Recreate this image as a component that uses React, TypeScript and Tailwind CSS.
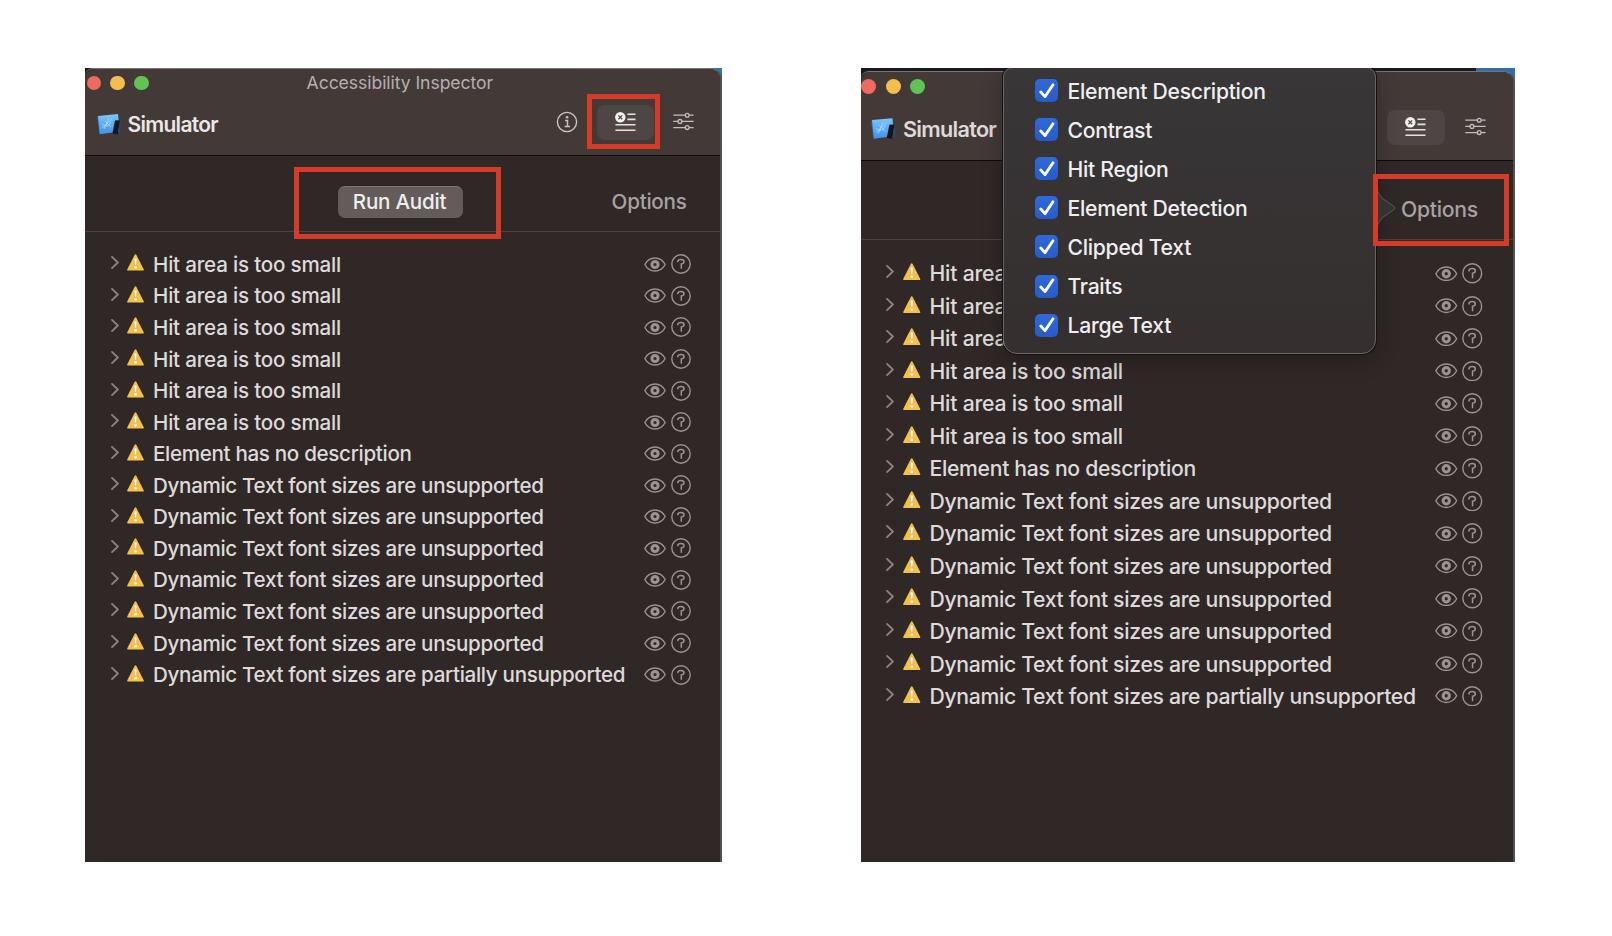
import type { ReactNode } from "react";

const issues = [
  ...Array<string>(6).fill("Hit area is too small"),
  "Element has no description",
  ...Array<string>(6).fill("Dynamic Text font sizes are unsupported"),
  "Dynamic Text font sizes are partially unsupported",
];

const auditChecks = [
  "Element Description",
  "Contrast",
  "Hit Region",
  "Element Detection",
  "Clipped Text",
  "Traits",
  "Large Text",
];

function SimulatorIcon({ className }: { className: string }) {
  return (
    <svg viewBox="0 0 24 21" className={className}>
      <defs>
        <linearGradient id="blueprint" x1="0" y1="0" x2="0" y2="1">
          <stop offset="0" stopColor="#7cc6f8" />
          <stop offset="1" stopColor="#3f92ea" />
        </linearGradient>
      </defs>
      <path d="M0 2.8L3 2.4L4 20L2.2 20Z" fill="#2a5f93" />
      <path d="M1 2L21 0.1L22.8 17.5L2.8 20.2Z" fill="url(#blueprint)" />
      <path d="M5 14L15 5M8 7L14 13M7 15L12 4M5 10Q10 15 14 8" stroke="#b5e0fb" strokeWidth="0.7" fill="none" />
      <path d="M18 6.6Q19.4 6 22.6 6.6Q23.2 6.8 23 7.6L21 19.6Q20.8 20.6 19.8 20.4L16.2 19.6Q15.4 19.4 15.6 18.6Z" fill="#12161f" />
      <path d="M22.8 7L24 9L23 17L21 19.6Z" fill="#28496f" />
    </svg>
  );
}

function InfoIcon({ className }: { className: string }) {
  return (
    <svg viewBox="0 0 22 22" className={className} fill="none" stroke="#c9c2c0" strokeWidth="1.4">
      <circle cx="11" cy="11" r="9.6" />
      <path d="M9 9.6H11.5V15.4M8.6 15.6H14" strokeWidth="1.5" />
      <circle cx="11.1" cy="6.3" r="1.3" fill="#c9c2c0" stroke="none" />
    </svg>
  );
}

function AuditIcon({ className }: { className: string }) {
  return (
    <svg viewBox="0 0 21 20" className={className} fill="none">
      <circle cx="5.3" cy="5.3" r="5.2" fill="#f3f0ef" />
      <path d="M3.4 3.4L7.2 7.2M7.2 3.4L3.4 7.2" stroke="#4d4644" strokeWidth="1.3" />
      <path d="M12.4 2.2H20.5M12.4 7.4H20.5M0.4 12.7H20.5M0.4 18.2H20.5" stroke="#e6e2e1" strokeWidth="1.6" />
    </svg>
  );
}

function SlidersIcon({ className }: { className: string }) {
  return (
    <svg viewBox="0 0 21 19" className={className} fill="none" stroke="#c4bebc" strokeWidth="1.3">
      <path d="M0.3 3.2H12.2M16.2 3.2H20.6M0.3 9.4H5M9 9.4H20.6M0.3 15.6H12.2M16.2 15.6H20.6" />
      <circle cx="14.2" cy="3.2" r="1.9" />
      <circle cx="7" cy="9.4" r="1.9" />
      <circle cx="14.2" cy="15.6" r="1.9" />
    </svg>
  );
}

function Chevron({ className }: { className: string }) {
  return (
    <svg viewBox="0 0 8 13" className={className} fill="none" stroke="#8b8483" strokeWidth="1.8">
      <path d="M1 0.9L6.9 6.5L1 12.1" strokeLinecap="round" strokeLinejoin="round" />
    </svg>
  );
}

function WarningIcon({ className }: { className: string }) {
  return (
    <svg viewBox="0 0 17 17" className={className}>
      <path d="M8.5 1.2L15.9 15.7H1.1Z" fill="#f3c14a" stroke="#f3c14a" strokeWidth="1.8" strokeLinejoin="round" />
      <path d="M7 4.6Q8.5 3.2 10 4.6L9.2 11H7.8Z" fill="#fff" stroke="#c08d2a" strokeWidth="0.3" />
      <circle cx="8.5" cy="13.3" r="1.3" fill="#fff" />
    </svg>
  );
}

function EyeIcon({ className }: { className: string }) {
  return (
    <svg viewBox="0 0 22 15" className={className} fill="none" stroke="#9a9392">
      <path d="M0.8 7.5C5.5 -1.2 16.5 -1.2 21.2 7.5C16.5 16.2 5.5 16.2 0.8 7.5Z" strokeWidth="1.4" strokeLinejoin="round" />
      <circle cx="11" cy="7.5" r="3.1" strokeWidth="3" />
    </svg>
  );
}

function HelpIcon({ className }: { className: string }) {
  return (
    <svg viewBox="0 0 20 20" className={className} fill="none" stroke="#9a9392">
      <circle cx="10" cy="10" r="9.2" strokeWidth="1.4" />
      <path d="M6.8 8.2V7.4Q7 5.4 10 5.4Q13 5.4 13 7.7Q13 9.4 10.3 9.9V14.8" strokeWidth="1.5" />
    </svg>
  );
}

function TrafficLights({ dot, className }: { dot: string; className: string }) {
  return (
    <div className={`flex items-center ${className}`}>
      <span className={`rounded-full bg-[#ec6a5e] ${dot}`} />
      <span className={`rounded-full bg-[#f4bd50] ${dot}`} />
      <span className={`rounded-full bg-[#61c354] ${dot}`} />
    </div>
  );
}

function IssueRow({ label, large }: { label: string; large: boolean }) {
  const tracking = label.startsWith("Hit") ? "tracking-[-0.2px]" : "tracking-[-0.32px]";
  return (
    <li className={large ? "flex h-[32.52px] items-center" : "flex h-[31.57px] items-center"}>
      <Chevron className={large ? "mb-[4px] ml-[25px] h-[13px] w-2 shrink-0" : "mb-[4px] ml-[26px] h-[13px] w-2 shrink-0"} />
      <WarningIcon className={large ? "mb-[4px] ml-[9px] h-[17.5px] w-[17.5px] shrink-0" : "mb-[4px] ml-[8px] h-[17px] w-[17px] shrink-0"} />
      <span className={`mt-[1px] ml-[9px] font-[450] ${large ? "text-[21.2px]" : "text-[20.6px]"} ${tracking}`}>{label}</span>
      <EyeIcon className={large ? "mb-[1px] ml-auto h-[15.5px] w-[22.5px] shrink-0" : "mb-[1px] ml-auto h-[15px] w-[22px] shrink-0"} />
      <HelpIcon className={large ? "mr-[30.5px] mb-[1px] ml-[4.5px] h-[20.5px] w-[20.5px] shrink-0" : "mr-[29px] mb-[1px] ml-[5px] h-5 w-5 shrink-0"} />
    </li>
  );
}

function IssueList({ large = false }: { large?: boolean }) {
  return (
    <ul className="text-[#dedada]">
      {issues.map((label, i) => (
        <IssueRow key={i} label={label} large={large} />
      ))}
    </ul>
  );
}

function Highlight({ className }: { className: string }) {
  return <div className={`absolute border-5 border-[#d63a28] ${className}`} />;
}

function CheckItem({ label }: { label: string }) {
  return (
    <li className="flex h-[39.1px] items-center">
      <span className="mb-[2px] flex size-[23px] items-center justify-center rounded-[5px] bg-linear-to-b from-[#3069dc] to-[#285bc6]">
        <svg viewBox="0 0 16 16" className="size-4" fill="none" stroke="#fff" strokeWidth="2.8" strokeLinecap="round" strokeLinejoin="round">
          <path d="M1.8 9L6 13.6L14 1.8" />
        </svg>
      </span>
      <span className="ml-[9.5px] text-[21.2px] font-[450] tracking-[-0.3px]">{label}</span>
    </li>
  );
}

function OptionsPopover() {
  return (
    <div className="absolute top-[-1px] left-[142px] h-[287px] w-[373px] rounded-[14px] rounded-t-[10px] border border-[#6a6564] bg-linear-to-b from-[#383637] to-[#352f2f] pt-[4px] pl-[31px] text-[#f0eeee] shadow-[0_0_0_1px_#151111,0_6px_22px_rgba(0,0,0,0.3)]">
      <ul>
        {auditChecks.map((label) => (
          <CheckItem key={label} label={label} />
        ))}
      </ul>
      <svg viewBox="0 0 20 38" className="absolute top-[121px] left-[373px] h-[38px] w-5">
        <path d="M0 0Q1 5 5 9L17 17.5Q19 19 17 20.5L5 29Q1 33 0 38" fill="#383333" stroke="#5c5655" strokeWidth="1" />
      </svg>
    </div>
  );
}

function Desktop({ className, children }: { className: string; children: ReactNode }) {
  return <section className={`relative h-[794px] shrink-0 overflow-hidden ${className}`}>{children}</section>;
}

export default function App() {
  return (
    <main className="flex h-[936px] w-[1612px] items-start overflow-hidden bg-white pt-[68px] pl-[85px] font-[Inter,'Liberation_Sans',sans-serif] whitespace-nowrap">
      <Desktop className="w-[637px] bg-linear-to-r from-[#1b1818] from-90% to-[#2f74b5] to-98%">
        <div className="flex h-full flex-col rounded-tl-[8px] rounded-tr-[12px] border-t border-r-2 border-t-[#7a7371] border-r-[#55504f] bg-[#302827]">
          <header className="h-[87px] rounded-t-[10px] border-b-[1.5px] border-[#0e0a0a] bg-[#433a38]">
            <div className="flex h-[28px] items-center">
              <TrafficLights dot="size-[14.5px]" className="ml-[1.5px] gap-[9.3px]" />
              <h1 className="ml-[158px] text-[17.6px] tracking-[-0.07px] text-[#b6afae]">Accessibility Inspector</h1>
            </div>
            <div className="flex h-[50px] items-center">
              <SimulatorIcon className="mt-[4px] ml-3 h-[21px] w-6" />
              <span className="mt-[5px] ml-[6.5px] text-[21px] font-semibold tracking-[-0.7px] text-[#eae7e6]">Simulator</span>
              <InfoIcon className="ml-auto size-[22px]" />
              <div className="ml-[19px] flex h-[35px] w-[57px] items-center justify-center rounded-[8px] bg-[#4e4644]">
                <AuditIcon className="mb-[1px] h-5 w-[21px]" />
              </div>
              <SlidersIcon className="mr-[26px] mb-[1px] ml-[19px] h-[19px] w-[21px]" />
            </div>
          </header>
          <div className="flex h-[76px] shrink-0 items-center border-b border-[#4a4342]">
            <button className="mt-4 ml-[253px] h-8 w-[125px] rounded-[7px] border-t border-[#7a7472] bg-[#635c5a] pr-[2px] text-[20.6px] font-[450] tracking-[-0.25px] text-[#f0eeed]">Run Audit</button>
            <span className="mt-[17px] mr-[33.5px] ml-auto text-[20.6px] font-[450] tracking-[-0.25px] text-[#a8a2a0]">Options</span>
          </div>
          <div className="pt-[17px]">
            <IssueList />
          </div>
        </div>
        <Highlight className="top-[26px] left-[502px] h-[55px] w-[73px]" />
        <Highlight className="top-[99px] left-[209px] h-[72px] w-[207px]" />
      </Desktop>

      <Desktop className="ml-[139px] w-[654px] bg-linear-to-r from-[#191b20] from-94% to-[#2f6fae] to-94%">
        <div className="mt-[3px] flex h-full flex-col rounded-tl-[8px] rounded-tr-[12px] border-t border-r-2 border-t-[#7a7371] border-r-[#55504f] bg-[#302827]">
          <header className="h-[89px] rounded-t-[10px] border-b-[1.5px] border-[#0e0a0a] bg-[#433a38]">
            <div className="flex h-[29px] items-center">
              <TrafficLights dot="size-[15px]" className="gap-[9.5px]" />
            </div>
            <div className="flex h-[52px] items-center">
              <SimulatorIcon className="mt-[4px] ml-[10px] h-[21.5px] w-[24.5px]" />
              <span className="mt-[4px] ml-[7.5px] text-[21.6px] font-semibold tracking-[-0.7px] text-[#dedad9]">Simulator</span>
              <div className="ml-auto flex h-[35px] w-[58px] items-center justify-center rounded-[8px] bg-[#4e4644]">
                <AuditIcon className="mb-[1px] mr-[1px] h-5 w-[21px]" />
              </div>
              <SlidersIcon className="mr-[27px] mb-[1px] ml-5 h-[19px] w-[21px]" />
            </div>
          </header>
          <div className="flex h-[79px] shrink-0 items-center border-b border-[#4a4342]">
            <span className="mt-[19px] mr-[35px] ml-auto text-[21.2px] font-[450] tracking-[-0.25px] text-[#a8a2a0]">Options</span>
          </div>
          <div className="pt-[17.5px]">
            <IssueList large />
          </div>
        </div>
        <OptionsPopover />
        <Highlight className="top-[106px] left-[512px] h-[72px] w-[136px]" />
      </Desktop>
    </main>
  );
}
